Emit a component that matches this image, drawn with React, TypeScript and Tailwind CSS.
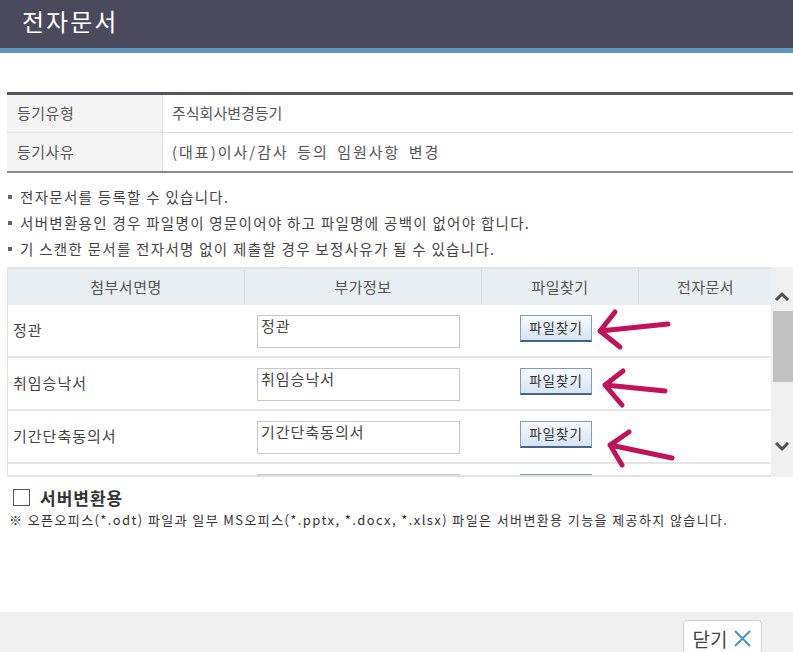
import React from "react";

const rows = [
  { name: "정관", arrow: { tip: [10, 26], end: [78, 19], top: [25, 7], bottom: [30, 42] } },
  { name: "취임승낙서", arrow: { tip: [15, 27], end: [75, 33], top: [33, 13], bottom: [32, 47] } },
  { name: "기간단축동의서", arrow: { tip: [20, 34], end: [82, 47], top: [39, 21], bottom: [32, 54] } },
  { name: "", arrow: null },
];

type Pt = number[];

const Arrow: React.FC<{ tip: Pt; end: Pt; top: Pt; bottom: Pt }> = ({ tip, end, top, bottom }) => (
  <svg className="absolute left-[582px] top-0 overflow-visible" width="90" height="53" viewBox="0 0 90 53">
    <path
      d={`M${end[0]} ${end[1]} L${tip[0]} ${tip[1]} M${top[0]} ${top[1]} L${tip[0]} ${tip[1]} L${bottom[0]} ${bottom[1]}`}
      fill="none"
      stroke="#c2125a"
      strokeWidth="5"
      strokeLinecap="round"
      strokeLinejoin="round"
    />
  </svg>
);

export default function App() {
  return (
    <div className="w-[793px] h-[652px] flex flex-col bg-white overflow-hidden font-['Noto_Sans_CJK_KR','Liberation_Sans',sans-serif]">
      {/* 상단 타이틀 */}
      <div className="h-[48px] shrink-0 bg-[#4b4a5c] pl-[22px] pb-[6px] flex items-center text-[24px] tracking-[2px] leading-none text-white">
        전자문서
      </div>
      <div className="h-[5px] shrink-0 bg-[#5d96ba]" />

      <div className="pl-[7px] pt-[39px]">
        {/* 등기 정보 */}
        <div className="border-t-[3px] border-b-2 border-t-[#56565e] border-b-[#8a8a8a] text-[15px] text-[#555]">
          <div className="grid grid-cols-[156px_1fr] h-[38px] border-b border-[#dcdcdc]">
            <div className="bg-[#f4f4f4] border-r border-[#dcdcdc] pl-[10px] flex items-center tracking-[0.5px]">등기유형</div>
            <div className="pl-[9px] flex items-center">주식회사변경등기</div>
          </div>
          <div className="grid grid-cols-[156px_1fr] h-[38px]">
            <div className="bg-[#f4f4f4] border-r border-[#dcdcdc] pl-[10px] flex items-center tracking-[0.5px]">등기사유</div>
            <div className="pl-[9px] flex items-center tracking-[2px] [word-spacing:3px]">(대표)이사/감사 등의 임원사항 변경</div>
          </div>
        </div>

        {/* 안내 */}
        <ul className="mt-[11px] text-[14.5px] tracking-[1.3px] text-[#444]">
          {[
            "전자문서를 등록할 수 있습니다.",
            "서버변환용인 경우 파일명이 영문이어야 하고 파일명에 공백이 없어야 합니다.",
            "기 스캔한 문서를 전자서명 없이 제출할 경우 보정사유가 될 수 있습니다.",
          ].map((t) => (
            <li key={t} className="h-[26px] flex items-center">
              <span className="w-[4px] h-[4px] bg-[#666] ml-[1px] mr-[8px]" />
              {t}
            </li>
          ))}
        </ul>

        {/* 첨부서면 */}
        <div className="mt-[5px] flex h-[210px]">
          <div className="w-[764px] flex flex-col border-t-2 border-b-2 border-[#e2e2e2] border-l border-l-[#e2e2e2]">
            <div className="grid grid-cols-[237px_237px_157px_133px] h-[36px] shrink-0 bg-[#e9eef2] text-[15px] tracking-[0.5px] text-[#555]">
              <div className="border-r border-[#d6dce1] flex items-center justify-center">첨부서면명</div>
              <div className="border-r border-[#d6dce1] flex items-center justify-center">부가정보</div>
              <div className="border-r border-[#d6dce1] flex items-center justify-center">파일찾기</div>
              <div className="flex items-center justify-center">전자문서</div>
            </div>
            <div className="flex-1 overflow-hidden">
              {rows.map((r, i) => (
                <div
                  key={i}
                  className="relative grid grid-cols-[237px_237px_157px_133px] h-[53px] border-b-2 border-[#e6e6e6] text-[15px] tracking-[1px] text-[#444]"
                >
                  <div className="pl-[5px] flex items-center">{r.name}</div>
                  <div className="pl-[12px] pt-[10px]">
                    <div className="w-[203px] h-[33px] border border-[#c9c9c9] px-[3px] leading-[20px]">{r.name}</div>
                  </div>
                  <div className="pl-[38px] pt-[10px]">
                    <button className="w-[72px] h-[27px] border border-[#7f9dbe] border-b-2 border-b-[#44648e] bg-gradient-to-b from-[#f7fafd] to-[#d6e4f2] text-[13.5px] tracking-[1px] text-[#333] leading-none flex items-center justify-center">
                      {r.name ? "파일찾기" : ""}
                    </button>
                  </div>
                  <div />
                  {r.arrow && <Arrow {...r.arrow} />}
                </div>
              ))}
            </div>
          </div>
          {/* 스크롤바 */}
          <div className="w-[22px] bg-[#f0f0f0] flex flex-col items-center pt-[23px]">
            <svg width="16" height="13" viewBox="0 0 16 13">
              <path d="M2 10 L8 4 L14 10" fill="none" stroke="#505050" strokeWidth="3" />
            </svg>
            <div className="mt-[8px] w-[20px] ml-[2px] h-[71px] bg-[#c1c1c1]" />
            <svg className="mt-[58px]" width="16" height="13" viewBox="0 0 16 13">
              <path d="M2 3 L8 9 L14 3" fill="none" stroke="#505050" strokeWidth="3" />
            </svg>
          </div>
        </div>
      </div>

      {/* 서버변환용 */}
      <div className="pl-[13px] mt-[12px] flex items-center h-[17px]">
        <span className="w-[17px] h-[17px] border border-[#555] bg-white" />
        <span className="ml-[10px] text-[17px] font-bold tracking-[1px] text-[#333] leading-none">서버변환용</span>
      </div>
      <div className="pl-[9px] mt-[5px] text-[13px] tracking-[1.4px] text-[#333] leading-[18px] whitespace-nowrap">
        ※ 오픈오피스(*.odt) 파일과 일부 MS오피스(*.pptx, *.docx, *.xlsx) 파일은 서버변환용 기능을 제공하지 않습니다.
      </div>

      <div className="flex-1" />

      {/* 하단 */}
      <div className="h-[40px] shrink-0 bg-[#f0f0f0] flex justify-end items-start pr-[31px] pt-[8px]">
        <button className="w-[79px] h-[36px] bg-white border border-[#cfcfcf] rounded-[4px] flex items-center justify-center gap-[6px] text-[19px] text-[#444] leading-none">
          닫기
          <svg width="19" height="19" viewBox="0 0 19 19">
            <path d="M2 2 L17 17 M17 2 L2 17" stroke="#4d8fd1" strokeWidth="2" fill="none" />
          </svg>
        </button>
      </div>
    </div>
  );
}
